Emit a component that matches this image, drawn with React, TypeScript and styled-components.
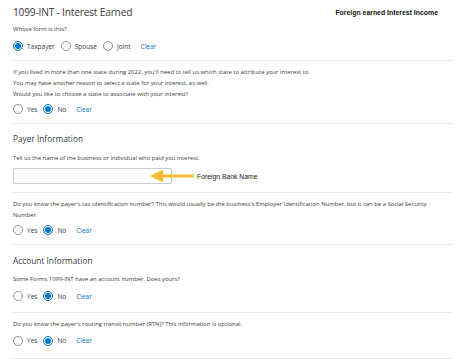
import React from 'react';
import styled, { createGlobalStyle } from 'styled-components';

const GlobalStyle = createGlobalStyle`
  html, body {
    margin: 0;
    padding: 0;
    background: #ffffff;
  }
  body {
    font-family: "Open Sans", "Noto Sans", sans-serif;
    color: #393a3d;
  }
`;

const Page = styled.main`
  width: 474px;
  height: 362px;
  overflow: hidden;
  padding: 0 22px 0 13px;
  box-sizing: border-box;
`;

const Section = styled.section<{ $pad: string }>`
  padding: ${({ $pad }) => $pad};
  border-bottom: 1px solid #e3e6ec;
`;

const HeaderRow = styled.div`
  display: flex;
  align-items: center;
  justify-content: space-between;
  padding-top: 3px;
`;

const Title = styled.h1`
  margin: 0;
  font-size: 10.2px;
  letter-spacing: -0.2px;
  line-height: 18px;
  font-weight: 400;
  color: #393a3d;
`;

const Note = styled.span`
  font-family: "Liberation Sans", Arial, sans-serif;
  font-weight: 700;
  font-size: 6.9px;
  color: #111;
  margin-right: 14px;
`;

const Heading = styled.h2`
  margin: 0;
  font-size: 8.3px;
  line-height: 14px;
  font-weight: 400;
  color: #393a3d;
`;

const Text = styled.p<{ $mt?: number }>`
  margin: ${({ $mt }) => $mt ?? 0}px 0 0;
  font-size: 5.9px;
  line-height: 11px;
  color: #393a3d;
`;

const RadioRow = styled.div<{ $mt?: number }>`
  display: flex;
  align-items: center;
  height: 12px;
  margin-top: ${({ $mt }) => $mt ?? 3}px;
`;

const Option = styled.label`
  display: flex;
  align-items: center;
  gap: 4px;
  margin-right: 6px;
  font-size: 6.5px;
  color: #393a3d;
`;

const Circle = styled.span<{ $on: boolean }>`
  width: 10px;
  height: 10px;
  box-sizing: border-box;
  border-radius: 50%;
  border: 1px solid ${({ $on }) => ($on ? '#0077c5' : '#8d9096')};
  display: flex;
  align-items: center;
  justify-content: center;
  &::after {
    content: '';
    width: 6px;
    height: 6px;
    border-radius: 50%;
    background: ${({ $on }) => ($on ? '#0077c5' : 'transparent')};
  }
`;

const Clear = styled.button`
  border: 0;
  background: none;
  padding: 0;
  margin-left: 4px;
  font-family: inherit;
  font-size: 6.5px;
  color: #0077c5;
`;

const InputRow = styled.div`
  display: flex;
  align-items: center;
  margin-top: 4.5px;
`;

const Input = styled.div`
  width: 159px;
  height: 16px;
  box-sizing: border-box;
  border: 1px solid #c8ccd2;
  border-radius: 2px;
  background: #fff;
`;

const Pointer = styled.div`
  display: flex;
  align-items: center;
  margin-left: -22px;
`;

const BankLabel = styled.span`
  font-family: "Liberation Sans", Arial, sans-serif;
  font-size: 6.8px;
  color: #222;
  margin-left: 3px;
`;

type RadioGroupProps = {
  options: string[];
  selected: string;
  mt?: number;
};

const RadioGroup = ({ options, selected, mt }: RadioGroupProps) => (
  <RadioRow $mt={mt}>
    {options.map((o) => (
      <Option key={o}>
        <Circle $on={o === selected} />
        {o}
      </Option>
    ))}
    <Clear>Clear</Clear>
  </RadioRow>
);

const yesNo = ['Yes', 'No'];

export default function App() {
  return (
    <>
      <GlobalStyle />
      <Page>
        <Section $pad="0 0 8px">
          <HeaderRow>
            <Title>1099-INT - Interest Earned</Title>
            <Note>Foreign earned Interest Income</Note>
          </HeaderRow>
          <Text $mt={2.5}>Whose form is this?</Text>
          <RadioGroup options={['Taxpayer', 'Spouse', 'Joint']} selected="Taxpayer" mt={5.5} />
        </Section>

        <Section $pad="6px 0 8px">
          <Text>
            If you lived in more than one state during 2022, you'll need to tell us which state to attribute your interest to.
            <br />
            You may have another reason to select a state for your interest, as well.
            <br />
            Would you like to choose a state to associate with your interest?
          </Text>
          <RadioGroup options={yesNo} selected="No" />
        </Section>

        <Section $pad="8px 0 8px">
          <Heading>Payer Information</Heading>
          <Text $mt={6.5}>Tell us the name of the business or individual who paid you interest.</Text>
          <InputRow>
            <Input />
            <Pointer>
              <svg width="44" height="14" viewBox="0 0 44 14">
                <path d="M0 7 L13 0.5 L13 13.5 Z" fill="#f6bd33" />
                <rect x="12" y="5.5" width="32" height="3" fill="#f6bd33" />
              </svg>
              <BankLabel>Foreign Bank Name</BankLabel>
            </Pointer>
          </InputRow>
        </Section>

        <Section $pad="6px 0 8px">
          <Text>
            Do you know the payer's tax identification number? This would usually be the business's Employer Identification Number, but it can be a Social Security Number.
          </Text>
          <RadioGroup options={yesNo} selected="No" />
        </Section>

        <Section $pad="9px 0 10px">
          <Heading>Account Information</Heading>
          <Text $mt={5.5}>Some Forms 1099-INT have an account number. Does yours?</Text>
          <RadioGroup options={yesNo} selected="No" mt={5.5} />
        </Section>

        <Section $pad="6px 0 11px">
          <Text>Do you know the payer's routing transit number (RTN)? This information is optional.</Text>
          <RadioGroup options={yesNo} selected="No" mt={4.5} />
        </Section>
      </Page>
    </>
  );
}
